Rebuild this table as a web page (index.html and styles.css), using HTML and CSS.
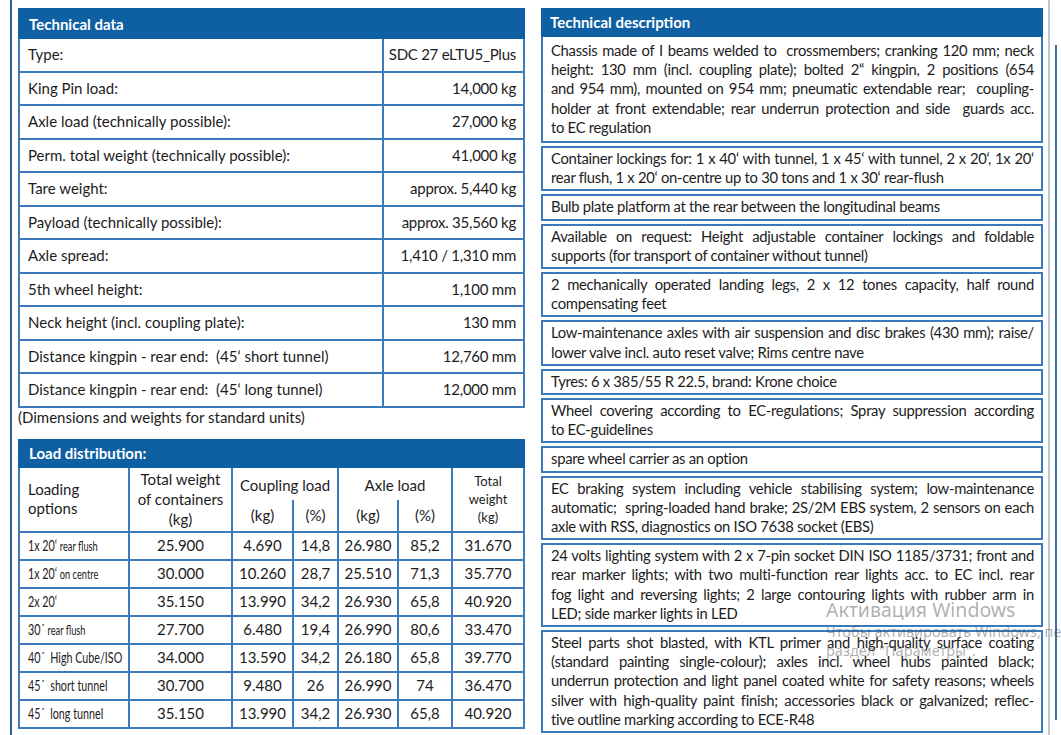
FILE: index.html
```html
<!DOCTYPE html>
<html lang="en">
<head>
<meta charset="utf-8">
<title>Technical data</title>
<link rel="stylesheet" href="styles.css">
</head>
<body>
<div class="page">
  <div class="left">
    <table class="tech">
      <colgroup><col class="k"><col class="val"></colgroup>
      <thead>
        <tr><th colspan="2" class="bar">Technical data</th></tr>
      </thead>
      <tbody>
        <tr><td>Type:</td><td class="v">SDC 27 eLTU5_Plus</td></tr>
        <tr><td>King Pin load:</td><td class="v">14,000 kg</td></tr>
        <tr><td>Axle load (technically possible):</td><td class="v">27,000 kg</td></tr>
        <tr><td>Perm. total weight (technically possible):</td><td class="v">41,000 kg</td></tr>
        <tr><td>Tare weight:</td><td class="v">approx. 5,440 kg</td></tr>
        <tr><td>Payload (technically possible):</td><td class="v">approx. 35,560 kg</td></tr>
        <tr><td>Axle spread:</td><td class="v">1,410 / 1,310 mm</td></tr>
        <tr><td>5th wheel height:</td><td class="v">1,100 mm</td></tr>
        <tr><td>Neck height (incl. coupling plate):</td><td class="v">130 mm</td></tr>
        <tr><td>Distance kingpin - rear end: &nbsp;(45‘ short tunnel)</td><td class="v">12,760 mm</td></tr>
        <tr><td>Distance kingpin - rear end: &nbsp;(45‘ long tunnel)</td><td class="v">12,000 mm</td></tr>
      </tbody>
    </table>
    <p class="note">(Dimensions and weights for standard units)</p>
    <table class="load">
      <colgroup>
        <col class="c1"><col class="c2"><col class="c3"><col class="c4"><col class="c5"><col class="c6"><col class="c7">
      </colgroup>
      <thead>
        <tr><th colspan="7" class="bar">Load distribution:</th></tr>
        <tr class="h1">
          <th rowspan="2" class="opt">Loading<br>options</th>
          <th rowspan="2" class="tw">Total weight<br>of containers<br>(kg)</th>
          <th colspan="2" class="grp">Coupling load</th>
          <th colspan="2" class="grp">Axle load</th>
          <th rowspan="2" class="small">Total<br>weight<br>(kg)</th>
        </tr>
        <tr class="h2"><th>(kg)</th><th>(%)</th><th>(kg)</th><th>(%)</th></tr>
      </thead>
      <tbody>
        <tr><td class="name"><span class="nm">1x 20‘ <small>rear flush</small></span></td><td>25.900</td><td>4.690</td><td>14,8</td><td>26.980</td><td>85,2</td><td>31.670</td></tr>
        <tr><td class="name"><span class="nm">1x 20‘ <small>on centre</small></span></td><td>30.000</td><td>10.260</td><td>28,7</td><td>25.510</td><td>71,3</td><td>35.770</td></tr>
        <tr><td class="name"><span class="nm">2x 20‘</span></td><td>35.150</td><td>13.990</td><td>34,2</td><td>26.930</td><td>65,8</td><td>40.920</td></tr>
        <tr><td class="name"><span class="nm">30´ <small>rear flush</small></span></td><td>27.700</td><td>6.480</td><td>19,4</td><td>26.990</td><td>80,6</td><td>33.470</td></tr>
        <tr><td class="name"><span class="nm">40´ &nbsp;High Cube/ISO</span></td><td>34.000</td><td>13.590</td><td>34,2</td><td>26.180</td><td>65,8</td><td>39.770</td></tr>
        <tr><td class="name"><span class="nm">45´ &nbsp;short tunnel</span></td><td>30.700</td><td>9.480</td><td>26</td><td>26.990</td><td>74</td><td>36.470</td></tr>
        <tr><td class="name"><span class="nm">45´ &nbsp;long tunnel</span></td><td>35.150</td><td>13.990</td><td>34,2</td><td>26.930</td><td>65,8</td><td>40.920</td></tr>
      </tbody>
    </table>
  </div>

  <div class="right">
    <div class="bar rbar">Technical description</div>
    <div class="cell first">
      <span class="l">Chassis made of I beams welded to &nbsp;crossmembers; cranking 120 mm; neck</span>
      <span class="l">height: 130 mm (incl. coupling plate); bolted 2“ kingpin, 2 positions (654</span>
      <span class="l">and 954 mm), mounted on 954 mm; pneumatic extendable rear; &nbsp;coupling-</span>
      <span class="l">holder at front extendable; rear underrun protection and side &nbsp;guards acc.</span>
      <span class="l end">to EC regulation</span>
    </div>
    <div class="cell">
      <span class="l">Container lockings for: 1 x 40‘ with tunnel, 1 x 45‘ with tunnel, 2 x 20‘, 1x 20‘</span>
      <span class="l end">rear flush, 1 x 20‘ on-centre up to 30 tons and 1 x 30‘ rear-flush</span>
    </div>
    <div class="cell">
      <span class="l end">Bulb plate platform at the rear between the longitudinal beams</span>
    </div>
    <div class="cell">
      <span class="l">Available on request: Height adjustable container lockings and foldable</span>
      <span class="l end">supports (for transport of container without tunnel)</span>
    </div>
    <div class="cell">
      <span class="l">2 mechanically operated landing legs, 2 x 12 tones capacity, half round</span>
      <span class="l end">compensating feet</span>
    </div>
    <div class="cell">
      <span class="l">Low-maintenance axles with air suspension and disc brakes (430 mm); raise/</span>
      <span class="l end">lower valve incl. auto reset valve; Rims centre nave</span>
    </div>
    <div class="cell">
      <span class="l end">Tyres: 6 x 385/55 R 22.5, brand: Krone choice</span>
    </div>
    <div class="cell">
      <span class="l">Wheel covering according to EC-regulations; Spray suppression according</span>
      <span class="l end">to EC-guidelines</span>
    </div>
    <div class="cell">
      <span class="l end">spare wheel carrier as an option</span>
    </div>
    <div class="cell">
      <span class="l">EC braking system including vehicle stabilising system; low-maintenance</span>
      <span class="l">automatic; &nbsp;spring-loaded hand brake; 2S/2M EBS system, 2 sensors on each</span>
      <span class="l end">axle with RSS, diagnostics on ISO 7638 socket (EBS)</span>
    </div>
    <div class="cell">
      <span class="l">24 volts lighting system with 2 x 7-pin socket DIN ISO 1185/3731; front and</span>
      <span class="l">rear marker lights; with two multi-function rear lights acc. to EC incl. rear</span>
      <span class="l">fog light and reversing lights; 2 large contouring lights with rubber arm in</span>
      <span class="l end">LED; side marker lights in LED</span>
    </div>
    <div class="cell">
      <span class="l">Steel parts shot blasted, with KTL primer and high-quality surface coating</span>
      <span class="l">(standard painting single-colour); axles incl. wheel hubs painted black;</span>
      <span class="l">underrun protection and light panel coated white for safety reasons; wheels</span>
      <span class="l">silver with high-quality paint finish; accessories black or galvanized; reflec-</span>
      <span class="l end">tive outline marking according to ECE-R48</span>
    </div>
  </div>

  <div class="edge edge-a"></div>
  <div class="edge edge-b"></div>

  <div class="watermark">
    <div class="wm1">Активация Windows</div>
    <div class="wm2">Чтобы активировать Windows, перейдите в<br>раздел "Параметры".</div>
  </div>
</div>
</body>
</html>
```

FILE: styles.css
```css
* { box-sizing: border-box; }

html, body {
  margin: 0;
  background: #ffffff;
  overflow: hidden;
}

body {
  font-family: Lato, "Open Sans", sans-serif;
  font-size: 15px;
  color: #1c1c1c;
  width: 1061px;
  height: 735px;
}

.page {
  position: relative;
  display: flex;
  align-items: flex-start;
  height: 735px;
  margin-left: 10px;
  border-left: 2px solid #2e5f9d;
  padding: 8px 0 0 6px;
  overflow: hidden;
}

.left {
  flex: none;
  width: 505px;
}

.right {
  flex: none;
  width: 502px;
  margin-left: 18px;
}

.bar {
  background: #0f5fa3;
  color: #ffffff;
  font-weight: 700;
  font-size: 15px;
  text-align: left;
  padding: 0 9px;
}

/* Technical data table */
.tech, .load {
  width: 505px;
  border-collapse: collapse;
  table-layout: fixed;
}

.tech col.k { width: 364px; }
.tech col.val { width: 141px; }

.tech th.bar {
  height: 29px;
  border: 2px solid #0f5fa3;
}

.tech td {
  border: 2px solid #3b7bbb;
  height: 33.5px;
  padding: 0 8px;
  white-space: nowrap;
  line-height: 19px;
}

.tech td.v {
  text-align: right;
  letter-spacing: -0.25px;
  padding: 0 7px 0 4px;
}

.note {
  margin: 0 0 12px;
  line-height: 19px;
}

/* Load distribution */
.load col.c1 { width: 110px; }
.load col.c2 { width: 103px; }
.load col.c3 { width: 61px; }
.load col.c4 { width: 45px; }
.load col.c5 { width: 60px; }
.load col.c6 { width: 54px; }
.load col.c7 { width: 72px; }

.load th, .load td {
  border: 2px solid #3b7bbb;
  font-weight: 400;
  line-height: 19px;
}

.load th.bar {
  height: 27px;
  border: 2px solid #0f5fa3;
  font-weight: 700;
}

.load .h1 th {
  height: 33px;
  text-align: center;
  vertical-align: middle;
  padding: 0;
}

.load .h1 th.opt {
  text-align: left;
  padding-left: 8px;
}

.load .h1 th.tw {
  line-height: 20px;
}

.load .h1 th.small {
  font-size: 13px;
  line-height: 18px;
}

.load .h1 th.grp {
  border-bottom: 0;
  vertical-align: top;
  padding-top: 8px;
}

.load .h2 th {
  border-top: 0;
  height: 32px;
  padding: 0;
  vertical-align: middle;
  text-align: center;
}

.load td {
  height: 28px;
  padding: 0;
  text-align: center;
  white-space: nowrap;
}

.load td.name {
  text-align: left;
  padding-left: 8px;
}

.load .nm {
  display: block;
  width: 125px;
  font-size: 14.5px;
  transform: scaleX(0.74);
  transform-origin: left center;
}

.load .nm small {
  font-size: 12.5px;
}

/* Technical description */
.rbar {
  height: 29px;
  line-height: 29px;
}

.cell {
  border: 2px solid #3b7bbb;
  padding: 1px 7px 2px 8px;
  font-size: 14.8px;
  letter-spacing: -0.28px;
  line-height: 19.2px;
  margin-top: 3px;
}

.cell.first {
  margin-top: 0;
  border-top: 0;
  padding-top: 4px;
  padding-bottom: 4px;
}

.l {
  display: block;
  white-space: nowrap;
  text-align: justify;
  text-align-last: justify;
}

.l.end {
  text-align-last: left;
}

/* page edges at right */
.edge {
  flex: none;
  align-self: stretch;
  margin-top: -8px;
}

.edge-a {
  width: 2px;
  margin-left: 5px;
  background: #b9c7d6;
}

.edge-b {
  width: 2px;
  margin-left: 5px;
  margin-top: 37px;
  margin-bottom: 15px;
  background: #3d6ea6;
}

/* OS watermark overlay */
.watermark {
  position: absolute;
  left: 814px;
  right: 0;
  top: 597px;
  overflow: hidden;
  color: rgba(60, 60, 60, 0.42);
  font-family: "Noto Sans", "Open Sans", sans-serif;
  white-space: nowrap;
  pointer-events: none;
}

.wm1 {
  font-size: 19.5px;
  line-height: 25px;
}

.wm2 {
  font-size: 14.5px;
  line-height: 19px;
}
```
